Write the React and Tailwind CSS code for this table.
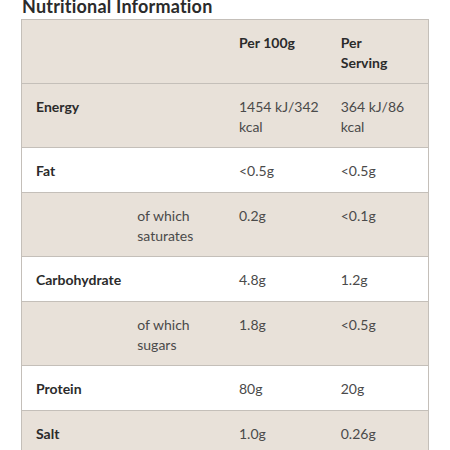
const rows = [
  { label: 'Energy', per100: ['1454 kJ/342', 'kcal'], serving: ['364 kJ/86', 'kcal'], shaded: true },
  { label: 'Fat', per100: ['<0.5g'], serving: ['<0.5g'] },
  { sub: ['of which', 'saturates'], per100: ['0.2g'], serving: ['<0.1g'], shaded: true },
  { label: 'Carbohydrate', per100: ['4.8g'], serving: ['1.2g'] },
  { sub: ['of which', 'sugars'], per100: ['1.8g'], serving: ['<0.5g'], shaded: true },
  { label: 'Protein', per100: ['80g'], serving: ['20g'] },
  { label: 'Salt', per100: ['1.0g'], serving: ['0.26g'], shaded: true },
];

const Lines = ({ lines }) => lines.map((l, i) => <div key={i} className="whitespace-nowrap">{l}</div>);

export default function App() {
  return (
    <div className="w-[450px] h-[450px] overflow-hidden bg-white font-['Lato',sans-serif] text-[#3a3a3a]">
      <h2 className="ml-[22px] -mt-[5px] text-[18px] leading-[22px] font-bold text-[#2b2b2b] tracking-[0.2px]">
        Nutritional Information
      </h2>

      {/* table */}
      <table className="ml-[21px] mt-[2px] w-[408px] table-fixed border-collapse border-x border-[#c4bfb9] text-[14px] leading-5">
        <thead>
          <tr className="bg-[#e8e1d9] border-y border-[#c4bfb9]">
            <th className="pl-[14px] pr-2 pt-[13px] pb-[10px]" />
            <th className="pl-[14px] pr-2 pt-[13px] pb-[10px]" />
            <th className="pl-[14px] pr-2 pt-[13px] pb-[10px] text-left align-top font-bold text-[#2b2b2b]">Per 100g</th>
            <th className="pl-[14px] pr-2 pt-[13px] pb-[10px] text-left align-top font-bold text-[#2b2b2b]">
              Per
              <br />
              Serving
            </th>
          </tr>
        </thead>
        <tbody>
          {rows.map((r, i) => {
            const pad = r.per100.length > 1 || r.sub ? 'pb-[10px]' : 'pb-[11px]';
            return (
              <tr key={i} className={`${r.shaded ? 'bg-[#e8e1d9]' : 'bg-white'} border-b border-[#c4bfb9]`}>
                <td className={`pl-[14px] pr-2 pt-[13px] ${pad} align-top font-bold text-[#2b2b2b]`}>{r.label}</td>
                <td className={`pl-[14px] pr-2 pt-[13px] ${pad} align-top text-[#4a4a4a]`}>{r.sub && <Lines lines={r.sub} />}</td>
                <td className={`pl-[14px] pr-2 pt-[13px] ${pad} align-top text-[#4a4a4a]`}><Lines lines={r.per100} /></td>
                <td className={`pl-[14px] pr-2 pt-[13px] ${pad} align-top text-[#4a4a4a]`}><Lines lines={r.serving} /></td>
              </tr>
            );
          })}
        </tbody>
      </table>
    </div>
  );
}
